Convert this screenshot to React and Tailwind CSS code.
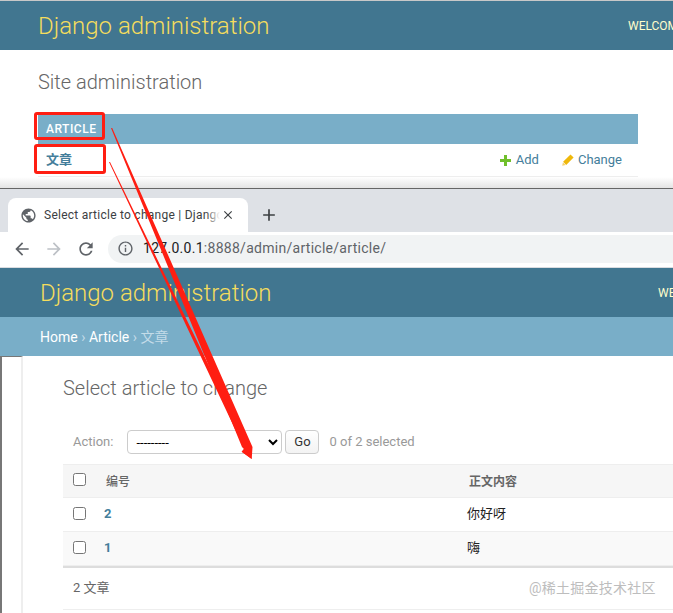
import React from 'react'

const ROBOTO = 'font-[Roboto,"Noto_Sans_CJK_SC",sans-serif]'

// Material paths used by the browser chrome
const PATHS = {
  globe: 'M12 2C6.48 2 2 6.48 2 12s4.48 10 10 10 10-4.48 10-10S17.52 2 12 2zm-1 17.93c-3.95-.49-7-3.85-7-7.93 0-.62.08-1.21.21-1.79L9 15v1c0 1.1.9 2 2 2v1.93zm6.9-2.54c-.26-.81-1-1.39-1.9-1.39h-1v-3c0-.55-.45-1-1-1H8v-2h2c.55 0 1-.45 1-1V7h2c1.1 0 2-.9 2-2v-.41c2.93 1.19 5 4.06 5 7.41 0 2.08-.8 3.97-2.1 5.39z',
  back: 'M20 11H7.83l5.59-5.59L12 4l-8 8 8 8 1.41-1.41L7.83 13H20v-2z',
  forward: 'M12 4l-1.41 1.41L16.17 11H4v2h12.17l-5.58 5.59L12 20l8-8z',
  reload: 'M17.65 6.35C16.2 4.9 14.21 4 12 4c-4.42 0-7.99 3.58-7.99 8s3.57 8 7.99 8c3.73 0 6.84-2.55 7.73-6h-2.08c-.82 2.33-3.04 4-5.65 4-3.31 0-6-2.69-6-6s2.69-6 6-6c1.66 0 3.14.69 4.22 1.78L13 11h7V4l-2.35 2.35z',
  info: 'M11 7h2v2h-2zm0 4h2v6h-2zm1-9C6.48 2 2 6.48 2 12s4.48 10 10 10 10-4.48 10-10S17.52 2 12 2zm0 18c-4.41 0-8-3.59-8-8s3.59-8 8-8 8 3.59 8 8-3.59 8-8 8z',
  close: 'M19 6.41L17.59 5 12 10.59 6.41 5 5 6.41 10.59 12 5 17.59 6.41 19 12 13.41 17.59 19 19 17.59 13.41 12z',
  plus: 'M19 13h-6v6h-2v-6H5v-2h6V5h2v6h6v2z',
}

function Glyph({ d, size = 20, className }) {
  return (
    <svg width={size} height={size} viewBox="0 0 24 24" className={className} fill="currentColor">
      <path d={d} />
    </svg>
  )
}

function AddIcon() {
  return (
    <svg width="11" height="11" viewBox="0 0 11 11" className="shrink-0">
      <path d="M4 0h3v4h4v3H7v4H4V7H0V4h4z" fill="#70bf2b" />
    </svg>
  )
}

function PencilIcon() {
  return (
    <svg width="12" height="12" viewBox="0 0 12 12" className="shrink-0">
      <path d="M8.5.4 11.6 3.5 4.2 10.9 1.1 7.8z" fill="#efb80b" />
      <path d="M.9 8.4 3.6 11.1.2 11.8z" fill="#f5cf6a" />
    </svg>
  )
}

function DjangoHeader({ userToolsLeft, titleLeft }) {
  return (
    <div className="flex h-[49px] items-center bg-[#417690]" style={{ paddingLeft: titleLeft }}>
      <span className="w-0 grow text-[24px] font-light leading-none whitespace-nowrap text-[#f5dd5d]">Django administration</span>
      <span className="overflow-hidden text-[12px] whitespace-nowrap text-[#ffc]" style={{ width: 673 - userToolsLeft }}>WELCOME</span>
    </div>
  )
}

function AppIndexPanel() {
  return (
    <section className="h-[189px] border-b border-[#666] bg-white">
      <div className="h-px bg-[#c8c8c8]" />
      <DjangoHeader userToolsLeft={628} titleLeft={38} />
      <h1 className="mt-[19px] ml-[38px] text-[20px] leading-[26px] font-light text-[#666]">Site administration</h1>
      <div className="mt-[19px] mr-[35px] ml-[38px]">
        <div className="flex h-[30px] items-center bg-[#79aec8] pl-[8px] text-[12px] font-medium tracking-[0.5px] text-white">ARTICLE</div>
        <div className="flex h-[33px] items-center border-b border-[#eee] pr-[16px] pl-[8px] text-[13px]">
          <span className="grow font-bold text-[#447e9b]">文章</span>
          <a className="flex items-center gap-[5px] text-[#447e9b]"><AddIcon />Add</a>
          <a className="ml-[23px] flex items-center gap-[4px] text-[#447e9b]"><PencilIcon />Change</a>
        </div>
      </div>
      <div className="h-[11px] bg-gradient-to-b from-white to-[#e4e4e4]" />
    </section>
  )
}

function BrowserChrome() {
  return (
    <div className="bg-white">
      <div className="flex h-[43px] items-end bg-[#dee1e6] pl-[8px]">
        <div className="relative flex h-[34px] w-[240px] items-center rounded-t-[8px] bg-white pr-[10px] pl-[12px]">
          <Glyph d={PATHS.globe} size={17} className="shrink-0 text-[#5f6368]" />
          <span className="relative ml-[7px] w-[176px] overflow-hidden text-[12px] tracking-[0.25px] whitespace-nowrap text-[#3c4043]">
            Select article to change | Django site admin
            <span className="absolute top-0 right-0 h-full w-[14px] bg-gradient-to-r from-transparent to-white" />
          </span>
          <Glyph d={PATHS.close} size={14} className="ml-[1px] shrink-0 text-[#3c4043]" />
        </div>
        <Glyph d={PATHS.plus} size={20} className="mb-[7px] ml-[11px] text-[#3c4043]" />
      </div>
      <div className="flex h-[36px] items-center border-b border-[#dadce0] pb-[2px] pl-[12px]">
        <Glyph d={PATHS.back} size={20} className="text-[#5f6368]" />
        <Glyph d={PATHS.forward} size={20} className="ml-[12px] text-[#bdc1c6]" />
        <Glyph d={PATHS.reload} size={20} className="ml-[12px] text-[#5f6368]" />
        <div className="ml-[12px] flex h-[28px] grow items-center rounded-l-[14px] bg-[#f1f3f4] pl-[9px]">
          <Glyph d={PATHS.info} size={17} className="text-[#5f6368]" />
          <span className="ml-[9px] text-[14px] tracking-[0.28px] whitespace-nowrap text-[#5f6368]"><span className="text-[#202124]">127.0.0.1</span>:8888/admin/article/article/</span>
        </div>
      </div>
    </div>
  )
}

function ChangeList() {
  const rows = [
    { id: 2, body: '你好呀', shade: 'bg-white' },
    { id: 1, body: '嗨', shade: 'bg-[#f9f9f9]' },
  ]
  return (
    <div className="flex">
      <div className="h-[257px] w-[23px] shrink-0 border-t border-r-2 border-l-2 border-t-[#777] border-r-[#eee] border-l-[#777]" />
      <div className="min-w-0 grow pl-[40px]">
        <h1 className="mt-[19px] text-[20px] leading-[26px] font-light text-[#666]">Select article to change</h1>
        <div className="mt-[29px] flex h-[24px] items-center text-[13px] text-[#999]">
          <span className="ml-[10px]">Action:</span>
          <select className="ml-[14px] h-[24px] w-[155px] rounded-[4px] border border-[#ccc] bg-white px-[4px] text-[13px] text-black">
            <option>---------</option>
          </select>
          <button className="ml-[3px] h-[24px] w-[34px] rounded-[4px] border border-[#ccc] bg-gradient-to-b from-white to-[#f3f3f3] text-[13px] text-[#333]">Go</button>
          <span className="ml-[10px]">0 of 2 selected</span>
        </div>
        <div className="mt-[10px] grid h-[34px] grid-cols-[43px_363px_1fr] items-center border-y border-[#eee] bg-[#f6f6f6] pt-[2px] text-[12px] font-medium text-[#666]">
          <input type="checkbox" className="mb-[6px] ml-[10px] h-[13px] w-[13px]" />
          <span>编号</span>
          <span className="font-bold">正文内容</span>
        </div>
        {rows.map(r => (
          <div key={r.id} className={`grid h-[34px] grid-cols-[41px_363px_1fr] items-center border-b border-[#eee] pb-[2px] text-[13px] ${r.shade}`}>
            <input type="checkbox" className="mb-[1px] ml-[10px] h-[13px] w-[13px]" />
            <span className="font-bold text-[#447e9b]">{r.id}</span>
            <span className="text-[#222]">{r.body}</span>
          </div>
        ))}
        <div className="flex h-[44px] items-center border-t-2 border-b border-t-[#ddd] border-b-[#eee] pb-[2px] pl-[10px] text-[13px] text-[#666]">2 文章</div>
      </div>
    </div>
  )
}

// Red annotation: boxes round the app links and two arrows down to the change list
function Annotations() {
  return (
    <>
      <div className="absolute top-[112px] left-[34px] h-[28px] w-[71px] rounded-[3px] border-[3px] border-[#ff1e12]" />
      <div className="absolute top-[144px] left-[34px] h-[30px] w-[72px] rounded-[3px] border-[3px] border-[#ff1e12]" />
      <svg className="absolute top-0 left-0" width="673" height="613" viewBox="0 0 673 613">
        <path d="M111 128 112.2 128 252.5 447 251.7 459 241.7 451.7 244 449 242 447Z" fill="#ff1e12" />
        <path d="M109 162 110 162 250 450 251.7 459 241.7 451.7 244 449 243.5 447Z" fill="#ff1e12" />
      </svg>
      <span className="absolute top-[578px] left-[529px] text-[14px] tracking-[0.25px] whitespace-nowrap text-[#bdbdbd]">@稀土掘金技术社区</span>
    </>
  )
}

export default function App() {
  return (
    <div className={`relative h-[613px] w-[673px] overflow-hidden bg-white ${ROBOTO}`}>
      <AppIndexPanel />
      <BrowserChrome />
      <DjangoHeader userToolsLeft={658} titleLeft={40} />
      <div className="flex h-[39px] items-center bg-[#79aec8] pt-px pl-[40px] text-[14px] text-white">
        Home<span className="mx-[3.5px] text-[#c4dce8]">›</span>Article<span className="mx-[3.5px] text-[#c4dce8]">›</span><span className="text-[#c4dce8]">文章</span>
      </div>
      <ChangeList />
      <Annotations />
    </div>
  )
}
